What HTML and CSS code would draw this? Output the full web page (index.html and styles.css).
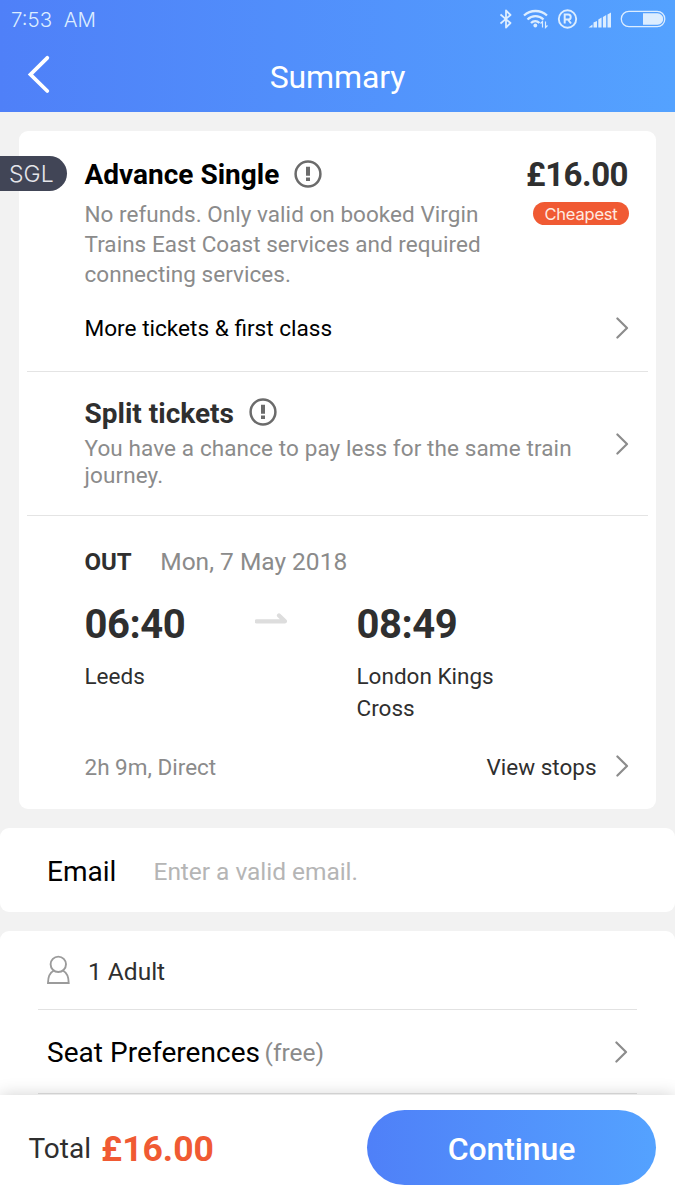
FILE: index.html
```html
<!DOCTYPE html>
<html lang="en">
<head>
<meta charset="utf-8">
<title>Summary</title>
<link rel="stylesheet" href="styles.css">
</head>
<body>
<div class="screen">
  <header class="header">
    <div class="status">
      <span class="clock">7:53&nbsp; AM</span>
      <svg class="status-icons" width="175" height="24" viewBox="0 0 175 24" fill="none" stroke="#dcedff" stroke-width="1.600">
        <path d="M.5 7.500l10 8.500-4.500 4.500V3.500l4.500 4.500-10 8.500" stroke-width="1.800" stroke-linejoin="round"/>
        <path d="M24 8.500c6.500-6 16.500-6 23 0M27.500 12.500c4.500-4.500 11.500-4.500 16 0M31 16c2.500-2.500 6-2.500 8.500 0" stroke-width="2.300"/>
        <circle cx="35.300" cy="18.500" r="1.900" fill="#dcedff" stroke="none"/>
        <path d="M42.500 20.500v-6l-2 2M45.500 14.500v6l2-2" stroke-width="1.200"/>
        <circle cx="67.500" cy="12" r="8.700" stroke-width="1.900"/>
        <path d="M64.700 16.500v-9h3.500a2.500 2.500 0 0 1 0 5h-3.500M68 12.500l3 4" stroke-width="2"/>
        <path d="M88.500 20.500l4-3v3zM93.500 20.500v-5l3.500-1.500v6.500zM98.300 20.500v-8l3.300-2v10zM102.900 20.500V10l3.300-2v12.500zM107.500 20.500V7.500l3.500-2v15z" fill="#dcedff" stroke="none"/>
        <rect x="121.300" y="4.300" width="43.500" height="15.400" rx="7.700" stroke-width="1.300"/>
        <path d="M143 6.300h14.500a5.700 5.700 0 0 1 0 11.400H143z" fill="#dcedff" stroke="none"/>
      </svg>
    </div>
    <div class="navbar">
      <svg class="back" width="24" height="40" viewBox="0 0 24 40" fill="none" stroke="#fff" stroke-width="3.800" stroke-linecap="round"><path d="M20.300 3.800L3.500 20.500l16.800 16.500"/></svg>
      <h1 class="title">Summary</h1>
    </div>
  </header>

  <main class="content">
    <section class="card ticket-card">
      <span class="trip-tag">SGL</span>
      <div class="ticket">
        <div class="ticket-top">
          <div class="ticket-info">
            <h2 class="heading heading-black"><span>Advance Single</span>
              <svg class="info" width="28" height="28" viewBox="0 0 28 28"><circle cx="14" cy="14" r="12.400" fill="none" stroke="#6b6b6b" stroke-width="2.500"/><path d="M12 6.700h4v9h-4zM12 17.500h4v3.500h-4z" fill="#6b6b6b"/></svg>
            </h2>
            <p class="desc">No refunds. Only valid on booked Virgin<br>Trains East Coast services and required<br>connecting services.</p>
          </div>
          <div class="price-box">
            <span class="price">£16.00</span>
            <span class="badge">Cheapest</span>
          </div>
        </div>
        <a class="more"><span>More tickets &amp; first class</span>
          <svg class="chevron" width="14" height="22" viewBox="0 0 14 22"><path d="M2.400 1.500L12 11 2.400 20.500"/></svg></a>
      </div>
      <div class="split">
        <div>
          <h2 class="heading"><span>Split tickets</span>
            <svg class="info" width="28" height="28" viewBox="0 0 28 28"><circle cx="14" cy="14" r="12.400" fill="none" stroke="#6b6b6b" stroke-width="2.500"/><path d="M12 6.700h4v9h-4zM12 17.500h4v3.500h-4z" fill="#6b6b6b"/></svg>
          </h2>
          <p class="desc desc-tight">You have a chance to pay less for the same train<br>journey.</p>
        </div>
        <svg class="chevron" width="14" height="22" viewBox="0 0 14 22"><path d="M2.400 1.500L12 11 2.400 20.500"/></svg>
      </div>
      <div class="journey">
        <div class="date-row"><b class="out">OUT</b><span class="date">Mon, 7 May 2018</span></div>
        <div class="legs">
          <div class="leg"><div class="time">06:40</div><div class="station">Leeds</div></div>
          <svg class="arrow" width="34" height="14" viewBox="0 0 34 14"><path d="M1.500 10.300h28.500L24 4.500" fill="none" stroke="#ddd" stroke-width="4.200" stroke-linecap="round" stroke-linejoin="round"/></svg>
          <div class="leg"><div class="time">08:49</div><div class="station">London Kings<br>Cross</div></div>
        </div>
        <div class="stops-row">
          <span class="duration">2h 9m, Direct</span>
          <a class="stops">View stops</a>
          <svg class="chevron" width="14" height="22" viewBox="0 0 14 22"><path d="M2.400 1.500L12 11 2.400 20.500"/></svg>
        </div>
      </div>
    </section>

    <section class="card email-card">
      <span class="email-label">Email</span>
      <span class="placeholder">Enter a valid email.</span>
    </section>

    <section class="card passengers">
      <div class="row adult-row">
        <svg width="24" height="30" viewBox="0 0 24 30" fill="none" stroke="#9b9b9b" stroke-width="1.900"><circle cx="11.300" cy="9.300" r="7.700"/><path d="M7 15.500C3 17.500 1 21.500 1 28h20.700c0-6.500-2-10.500-6-12.500"/></svg>
        <span class="adult">1 Adult</span>
      </div>
      <div class="row seat-row">
        <span class="seat">Seat Preferences</span><span class="free">(free)</span>
        <svg class="chevron" width="14" height="22" viewBox="0 0 14 22"><path d="M2.400 1.500L12 11 2.400 20.500"/></svg>
      </div>
    </section>
  </main>

  <footer class="footer">
    <span class="total">Total</span>
    <span class="total-price">£16.00</span>
    <button class="continue">Continue</button>
  </footer>
</div>
</body>
</html>
```
FILE: styles.css
```css
* { box-sizing: border-box; }
body { margin: 0; font-family: Roboto, sans-serif; color: #2f2f2f; background: #f2f2f2; }
h1, h2, p { margin: 0; font-weight: 400; }
svg { flex: none; display: block; }
.screen { width: 675px; height: 1200px; display: flex; flex-direction: column; overflow: hidden; }

.header { height: 112px; flex: none; color: #fff; background: linear-gradient(90deg, #4f80f8, #54a2ff); }
.status { height: 38px; display: flex; align-items: center; justify-content: space-between; padding-left: 11px; }
.clock { padding-top: 1px; font: 300 20.500px/24px Inter, sans-serif; color: #dcedff; white-space: nowrap; }
.navbar { height: 74px; display: grid; grid-template-columns: 52px 1fr 52px; align-items: center; }
.back { margin-left: 27px; margin-bottom: 2px; }
.title { font-size: 32px; line-height: 40px; text-align: center; padding-top: 3px; letter-spacing: -.1px; }

.content { flex: 1; min-height: 0; overflow: hidden; padding-top: 19px; display: flex; flex-direction: column; gap: 19px; }
.card { background: #fff; flex: none; border-radius: 9px; }
.ticket-card { position: relative; height: 678px; margin: 0 19px; padding: 0 8px; }
.trip-tag { position: absolute; left: -19px; top: 25px; width: 67px; height: 35px; padding-left: 9px; border-radius: 0 18px 18px 0; background: #414556; color: #e5e5ea; font: 300 23px/37px Inter, sans-serif; }

.heading { display: flex; align-items: center; font-size: 28px; line-height: 34px; font-weight: 700; color: #2f2f2f; white-space: nowrap; }
.heading span { padding-top: 2px; line-height: 32px; }
.heading-black { color: #000; }
.info { margin-left: 15px; }
.desc { font-size: 22.500px; line-height: 30px; letter-spacing: .04px; color: #8b8b8b; white-space: nowrap; }
.desc-tight { line-height: 27px; letter-spacing: .11px; }
.chevron { fill: none; stroke: #8c8c8c; stroke-width: 2.200; stroke-linecap: round; stroke-linejoin: round; }

.ticket { height: 241px; padding: 26px 19px 0 57.500px; border-bottom: 1px solid #e4e4e4; }
.ticket-top { display: flex; justify-content: space-between; }
.ticket-info .desc { margin-top: 8px; }
.price-box { display: flex; flex-direction: column; align-items: flex-end; }
.price { margin-right: 1px; font-size: 33px; line-height: 35px; letter-spacing: -.5px; font-weight: 700; }
.badge { margin-top: 10px; width: 96px; height: 23px; border-radius: 12px; background: #f05a33; color: #ffeae0; font: 400 16.500px/24px Inter, sans-serif; letter-spacing: -.2px; text-align: center; }
.more { display: flex; justify-content: space-between; align-items: center; margin-top: 25px; font-size: 22.600px; line-height: 30px; color: #000; }
.more .chevron { margin-bottom: 2px; }

.split { height: 144px; padding: 23px 19px 0 57.500px; border-bottom: 1px solid #e4e4e4; display: flex; justify-content: space-between; }
.split .heading span { padding-top: 4px; line-height: 30px; }
.split .desc { margin-top: 6px; }
.split .chevron { margin-top: 38px; }

.journey { padding: 31px 19px 0 57.500px; }
.date-row { display: flex; align-items: baseline; line-height: 30px; }
.out { font-size: 24px; }
.date { margin-left: 28.500px; font-size: 24.500px; color: #8b8b8b; }
.legs { display: grid; grid-template-columns: 170px 102px 1fr; margin-top: 25px; }
.time { font-size: 40px; line-height: 46px; font-weight: 700; letter-spacing: -.45px; }
.station { margin-top: 12px; font-size: 22.500px; line-height: 32px; }
.arrow { margin-top: 9px; }
.stops-row { display: flex; align-items: center; margin-top: 28px; font-size: 22.500px; line-height: 30px; }
.duration { flex: 1; color: #8b8b8b; }
.stops { margin-right: 18.500px; }
.stops-row .chevron { margin-bottom: 2px; }

.email-card { height: 84px; display: flex; align-items: flex-start; padding: 27px 47px 0; }
.email-label { width: 106.500px; font-size: 28px; line-height: 34px; color: #000; }
.placeholder { font-size: 24.500px; line-height: 34px; letter-spacing: -.04px; color: #b5b5b5; }

.passengers { height: 180px; padding: 0 38px; }
.row { display: flex; align-items: center; border-bottom: 1px solid #e2e2e2; padding: 0 9px; }
.adult-row { height: 79px; }
.adult { font-size: 24.500px; margin-left: 17px; padding-top: 2px; }
.seat-row { height: 84px; }
.seat { font-size: 28px; letter-spacing: .05px; color: #000; padding-top: 2px; }
.free { flex: 1; margin-left: 4.500px; font-size: 24.500px; color: #8b8b8b; padding-top: 2px; }

.footer { position: relative; height: 105px; flex: none; background: #fff; display: flex; align-items: center; padding: 0 19px 0 28.500px; box-shadow: 0 0 16px rgba(0, 0, 0, .18); }
.total { font-size: 28px; padding-top: 2px; }
.total-price { margin-left: 10px; padding-top: 3px; font-size: 35.500px; font-weight: 700; color: #f05a33; }
.continue { margin-left: auto; width: 289px; height: 75px; padding: 2px 0 0; border: 0; border-radius: 38px; color: #fff; font: 500 32px/40px Roboto, sans-serif; letter-spacing: -.1px; background: linear-gradient(90deg, #4f80f8, #54a2ff); }
```
